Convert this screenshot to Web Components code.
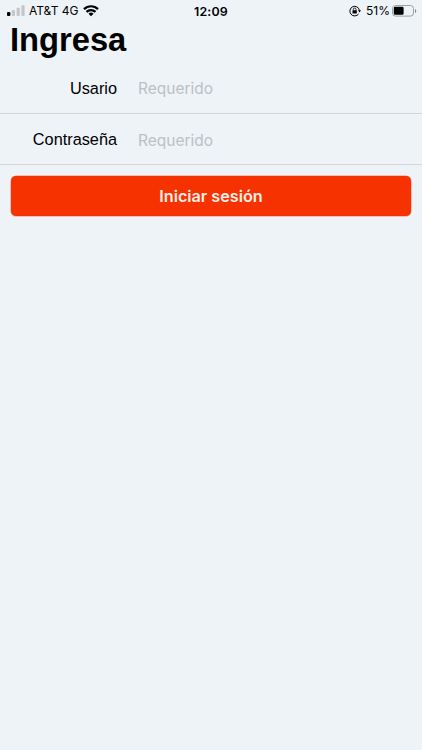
<!DOCTYPE html>
<html lang="es">
<head>
  <meta charset="utf-8">
  <meta name="viewport" content="width=device-width, initial-scale=1">
  <title>Ingresa</title>
  <style>
    body {
      margin: 0;
      background: #eef3f7;
      color: #000;
      font-family: "Liberation Sans", Arial, sans-serif;
    }
  </style>
</head>
<body>
  <login-screen></login-screen>

  <script>
    class StatusBar extends HTMLElement {
      constructor() {
        super();
        this.attachShadow({ mode: "open" });
      }

      connectedCallback() {
        this.shadowRoot.innerHTML = `
          <style>
            :host {
              display: grid;
              grid-template-columns: 1fr auto 1fr;
              grid-template-rows: 22px;
              box-sizing: border-box;
              height: 22px;
              padding: 0 5px 0 7px;
              font: 12px/22px Inter, sans-serif;
              white-space: nowrap;
            }
            svg { display: block; flex: none; }
            .left, .right { display: flex; align-items: center; }
            .right { justify-content: flex-end; }
            .carrier { margin: 0 5px 0 4px; }
            .time {
              margin-right: 2px;
              font-size: 12.4px;
              font-weight: 600;
              line-height: 24px;
              letter-spacing: 0.2px;
            }
            .battery { margin: 0 2px 0 5px; }
          </style>
          <div class="left">
            <svg width="18" height="12" viewBox="0 0 18 12">
              <rect x="0" y="7" width="3.4" height="4" rx="1"/>
              <g fill="#c3c7ca">
                <rect x="4.8" y="5" width="3.2" height="6" rx=".7"/>
                <rect x="9.6" y="2.7" width="3.2" height="8.3" rx=".7"/>
                <rect x="14.4" y="0.3" width="3.2" height="10.7" rx=".7"/>
              </g>
            </svg>
            <span class="carrier">AT&amp;T 4G</span>
            <svg width="16" height="12" viewBox="0 0 16 12">
              <g fill="none" stroke="#000" stroke-width="2.2">
                <path d="M1 4.1a10 10 0 0 1 14 0"/>
                <path d="M3.5 6.9a6.4 6.4 0 0 1 9 0"/>
              </g>
              <path d="M5.5 8.7a3.6 3.6 0 0 1 5 0L8 11.3z"/>
            </svg>
          </div>
          <span class="time">12:09</span>
          <div class="right">
            <svg width="12" height="12" viewBox="0 0 12 12">
              <g fill="none" stroke="#000">
                <path stroke-width="1" d="M9.6 8.9a4.8 4.8 0 1 1 .8-3.6"/>
                <path stroke-width=".8" d="M4.3 5.6V4.4a1.35 1.35 0 0 1 2.7 0v1.2"/>
              </g>
              <rect x="3.5" y="5.3" width="4.3" height="3.2" rx=".5"/>
              <path d="M8.9 5.2H12l-1.5 2.4z"/>
            </svg>
            <span class="battery">51%</span>
            <svg width="25" height="12" viewBox="0 0 25 12">
              <rect x=".5" y=".5" width="21" height="10.6" rx="3" fill="none" stroke="#9da1a4"/>
              <rect x="1.8" y="1.8" width="9.8" height="8" rx="1.3"/>
              <path d="M23 4a2.2 2.2 0 0 1 0 4z" fill="#85898c"/>
            </svg>
          </div>
        `;
      }
    }

    class FormField extends HTMLElement {
      constructor() {
        super();
        this.attachShadow({ mode: "open" });
      }

      connectedCallback() {
        const type = this.getAttribute("type") || "text";
        const hint = this.getAttribute("placeholder") || "";
        this.shadowRoot.innerHTML = `
          <style>
            :host { display: block; border-bottom: 1px solid #d3d7da; }
            label {
              display: grid;
              grid-template-columns: 117px 1fr;
              column-gap: 21px;
              align-items: center;
              height: 50px;
              font-size: 16.3px;
            }
            .label { text-align: right; }
            input {
              min-width: 0;
              padding: 1px 0 0;
              border: 0;
              outline: 0;
              background: none;
              font: 15.5px/20px Inter, sans-serif;
            }
            input[type="password"] { padding-top: 3px; }
            input::placeholder { color: #bcc0c5; opacity: 1; }
          </style>
          <label>
            <span class="label"><slot></slot></span>
            <input type="${type}" placeholder="${hint}">
          </label>
        `;
      }
    }

    class PrimaryButton extends HTMLElement {
      constructor() {
        super();
        this.attachShadow({ mode: "open" });
      }

      connectedCallback() {
        this.shadowRoot.innerHTML = `
          <style>
            :host { display: block; }
            button {
              display: block;
              width: 100%;
              height: 40px;
              padding: 0;
              border: 0;
              border-radius: 5px;
              background: #f63200;
              box-shadow: 0 0 0 0.5px #f6320088;
              color: #fdeee9;
              font: 600 16.2px/40px Inter, sans-serif;
            }
          </style>
          <button type="button"><slot></slot></button>
        `;
      }
    }

    class LoginScreen extends HTMLElement {
      constructor() {
        super();
        this.attachShadow({ mode: "open" });
      }

      connectedCallback() {
        this.shadowRoot.innerHTML = `
          <style>
            :host { display: block; min-height: 100vh; }
            h1 {
              margin: 0;
              padding: 0 10px;
              font-size: 32.7px;
              line-height: 36px;
            }
            form { padding-top: 5px; }
            primary-button { margin: 11px 11px 0; }
          </style>
          <status-bar></status-bar>
          <h1>Ingresa</h1>
          <form>
            <form-field placeholder="Requerido">Usario</form-field>
            <form-field type="password" placeholder="Requerido">Contraseña</form-field>
            <primary-button>Iniciar sesión</primary-button>
          </form>
        `;
      }
    }

    customElements.define("status-bar", StatusBar);
    customElements.define("form-field", FormField);
    customElements.define("primary-button", PrimaryButton);
    customElements.define("login-screen", LoginScreen);
  </script>
</body>
</html>
